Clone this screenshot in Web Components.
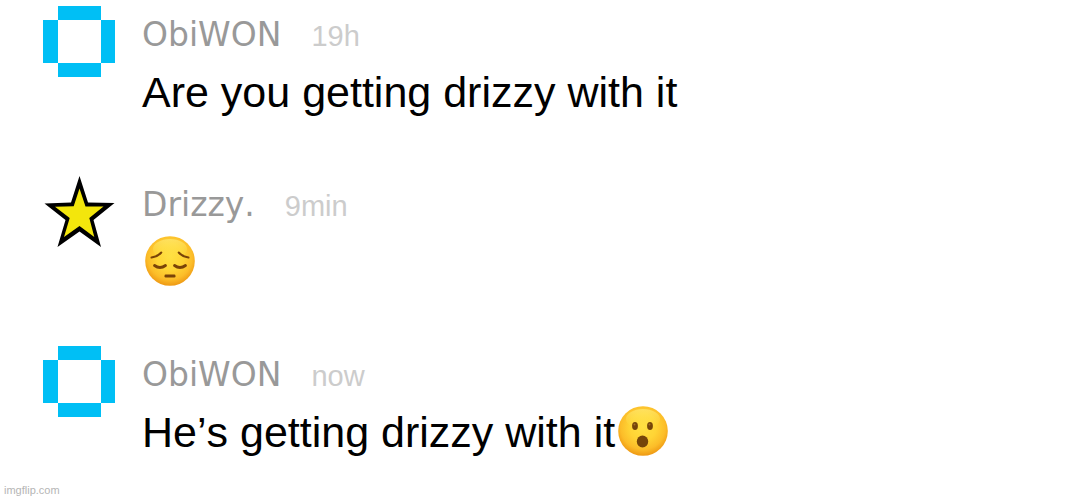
<!DOCTYPE html>
<html lang="en">
<head>
<meta charset="utf-8">
<meta name="viewport" content="width=device-width, initial-scale=1">
<title>Chat</title>
<style>
  body { margin: 0; background: #fff; font-family: "Liberation Sans", Arial, sans-serif; font-kerning: none; color: #000; }
</style>
</head>
<body>
<chat-thread>
  <chat-message author="ObiWON" time="19h"><ring-avatar slot="avatar"></ring-avatar>Are you getting drizzy with it</chat-message>
  <chat-message author="Drizzy." time="9min"><star-avatar slot="avatar"></star-avatar><face-emoji mood="pensive"></face-emoji></chat-message>
  <chat-message author="ObiWON" time="now"><ring-avatar slot="avatar"></ring-avatar>He’s getting drizzy with it<face-emoji mood="surprised"></face-emoji></chat-message>
  <span slot="credit">imgflip.com</span>
</chat-thread>
<script>
class BaseElement extends HTMLElement {
  connectedCallback() {
    if (!this.shadowRoot) this.attachShadow({ mode: "open" }).innerHTML = this.render();
  }
}

customElements.define("ring-avatar", class extends BaseElement {
  render() {
    return `<style>:host{display:block;width:72px;height:72px}svg{display:block}</style>
      <svg width="72" height="72" viewBox="0 0 72 72" fill="#00bff5" shape-rendering="crispEdges" aria-hidden="true">
        <path d="M15 0H58V14H15zM0 14H15V57H0zM58 14H72V57H58zM15 57H58V71H15z"/>
      </svg>`;
  }
});

customElements.define("star-avatar", class extends BaseElement {
  render() {
    return `<style>:host{display:block;width:72px;height:72px}svg{display:block}</style>
      <svg width="72" height="72" viewBox="0 0 72 72" aria-hidden="true">
        <path d="M36.500 0L45 26.500L71.500 27L50.500 44L58 71L36.500 55.500L14.500 71L22.500 44L1.500 27.500L28 26.500z"/>
        <path fill="#f3e60c" d="M36.500 12.500L42.500 30.500L60.500 30.500L46.300 42L51.300 61L36.500 50L21 61L26.700 42L12 30.700L30.700 30.300z"/>
      </svg>`;
  }
});

const FACES = {
  pensive: `<g fill="none" stroke="#7a4308" stroke-linecap="round">
      <path stroke-width="2" d="M6.500 21.500Q13 20.500 16.300 16.500M43.500 21.500Q37 20.500 33.700 16.500"/>
      <path stroke-width="2.800" d="M9.500 29.500Q15 33.500 20.500 29.500M29.500 29.500Q35 33.500 40.500 29.500"/>
    </g><rect x="19.500" y="38.500" width="11" height="2.900" rx="1.200" fill="#7a4308"/>`,
  surprised: `<g fill="#754509"><ellipse cx="17" cy="20" rx="2.900" ry="3.900"/><ellipse cx="32" cy="20" rx="2.900" ry="3.900"/>
      <ellipse cx="24.500" cy="35.500" rx="5.700" ry="5.900"/></g>
      <g fill="#a66f28"><circle cx="16.500" cy="18.500" r="1"/><circle cx="31.500" cy="18.500" r="1"/></g>`
};
let emojiCount = 0;
customElements.define("face-emoji", class extends BaseElement {
  render() {
    const mood = this.getAttribute("mood");
    const id = "skin" + emojiCount++;
    return `<style>:host{display:inline-block;width:50px;height:50px;margin:0 3px;vertical-align:-9px}svg{display:block}</style>
      <svg width="50" height="50" viewBox="0 0 50 50" role="img" aria-label="${mood} face">
        <defs>
          <radialGradient id="${id}" cx=".5" cy=".42" r=".6">
            <stop offset="0" stop-color="#ffe041"/><stop offset=".45" stop-color="#ffd435"/>
            <stop offset=".75" stop-color="#fcbd29"/><stop offset="1" stop-color="#ec9310"/>
          </radialGradient>
          <linearGradient id="${id}s" x2="0" y2="1">
            <stop offset="0" stop-color="#fff180" stop-opacity=".6"/><stop offset="1" stop-color="#ffe64a" stop-opacity="0"/>
          </linearGradient>
        </defs>
        <circle cx="25" cy="25" r="24.800" fill="url(#${id})"/>
        <ellipse cx="25" cy="13" rx="17" ry="10" fill="url(#${id}s)"/>
        ${FACES[mood]}
      </svg>`;
  }
});

customElements.define("chat-message", class extends BaseElement {
  render() {
    return `<style>
        :host{display:grid;grid-template-columns:72px 1fr;column-gap:27px;min-height:170px}
        article{min-width:0}
        header{display:flex;align-items:baseline;gap:30px;padding-top:9px;line-height:40px}
        .name{font-family:"DejaVu Sans",Verdana,sans-serif;font-size:33px;color:#999}
        time{font-size:29px;color:#ccc}
        p{margin:8px 0 0;font-size:43px;line-height:56px}
      </style>
      <slot name="avatar"></slot>
      <article>
        <header><span class="name">${this.getAttribute("author")}</span><time>${this.getAttribute("time")}</time></header>
        <p><slot></slot></p>
      </article>`;
  }
});

customElements.define("chat-thread", class extends BaseElement {
  render() {
    return `<style>
        :host{display:flex;flex-direction:column;box-sizing:border-box;min-height:100vh}
        main{flex:1;padding:6px 16px 0 43px;margin-bottom:-35px}
        footer{padding:0 4px 3px;font-size:11px;line-height:12px;color:#b5b5b5}
      </style>
      <main><slot></slot></main>
      <footer><slot name="credit"></slot></footer>`;
  }
});
</script>
</body>
</html>
